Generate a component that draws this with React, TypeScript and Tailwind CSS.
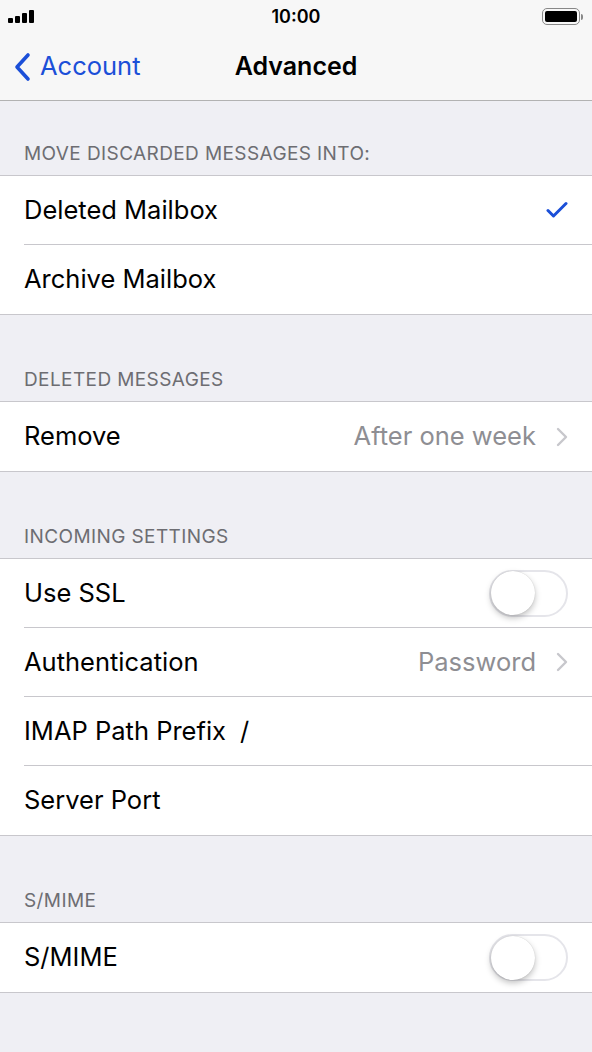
import React from "react";

const font = { fontFamily: "Inter, 'Noto Sans', sans-serif" };

function Chevron() {
    return (
        <svg width="12" height="20" viewBox="0 0 12 20" className="ml-5 shrink-0">
            <path d="M2 2 L10 10 L2 18" fill="none" stroke="#c7c7cc" strokeWidth="2.4" strokeLinecap="round" strokeLinejoin="round" />
        </svg>
    );
}

function Toggle() {
    return (
        <div className="relative h-[47px] w-[79px] rounded-full border-2 border-[#e5e5ea] bg-white">
            <div className="absolute left-0 top-[-0.5px] h-[44px] w-[44px] rounded-full bg-white shadow-[0_3px_6px_rgba(0,0,0,0.25),0_0_1px_rgba(0,0,0,0.2)]" />
        </div>
    );
}

function Check() {
    return (
        <svg width="22" height="18" viewBox="0 0 22 18">
            <path d="M2 9.5 L7.5 15 L20 2.5" fill="none" stroke="#1b4fd8" strokeWidth="3" strokeLinecap="round" strokeLinejoin="round" />
        </svg>
    );
}

function Header({ text, first }: { text: string; first?: boolean }) {
    return (
        <div
            className={`flex items-end px-6 pb-[7px] text-[19px] leading-[28px] tracking-[0.4px] text-[#6d6d72] ${first ? "h-[74px]" : "h-[86px]"}`}
        >
            {text}
        </div>
    );
}

function Row({ label, right, last }: { label: React.ReactNode; right?: React.ReactNode; last?: boolean }) {
    return (
        <div className="flex h-[69px] items-stretch bg-white pl-6">
            <div className={`flex flex-1 items-center pr-6 ${last ? "" : "border-b border-[#c8c7cc]"}`}>
                <div className="flex-1 text-[25.5px] text-black">{label}</div>
                {right}
            </div>
        </div>
    );
}

function Group({ children }: { children: React.ReactNode }) {
    return <div className="border-y border-[#c8c7cc]">{children}</div>;
}

function Value({ text }: { text: string }) {
    return (
        <div className="flex items-center text-[25.5px] text-[#8e8e93]">
            {text}
            <Chevron />
        </div>
    );
}

export default function App() {
    return (
        <div className="flex h-[1052px] w-[592px] flex-col bg-[#efeff4]" style={font}>
            <div className="border-b border-[#b2b2b2] bg-[#f7f7f7]">
                <div className="relative flex h-[33px] items-center justify-center">
                    <div className="absolute left-[8px] top-[10px] flex items-end gap-[2px]">
                        <div className="h-[5px] w-[5px] rounded-[1px] bg-black" />
                        <div className="h-[7px] w-[5px] rounded-[1px] bg-black" />
                        <div className="h-[10px] w-[5px] rounded-[1px] bg-black" />
                        <div className="h-[13px] w-[5px] rounded-[1px] bg-black" />
                    </div>
                    <span className="text-[18px] font-semibold text-black">10:00</span>
                    <div className="absolute right-[9px] top-[8px] flex items-center">
                        <div className="flex h-[17px] w-[38px] items-center rounded-[5px] border border-[#888] p-[2px]">
                            <div className="h-full w-full rounded-[2px] bg-black" />
                        </div>
                        <div className="ml-[1px] h-[6px] w-[2px] rounded-r-sm bg-[#888]" />
                    </div>
                </div>
                <div className="relative flex h-[67px] items-center justify-center">
                    <div className="absolute left-[12px] top-0 flex h-full items-center text-[#1b4fd8]">
                        <svg width="22" height="30" viewBox="0 0 22 30">
                            <path d="M16 3 L5 15 L16 27" fill="none" stroke="#1b4fd8" strokeWidth="3.6" strokeLinecap="round" strokeLinejoin="round" />
                        </svg>
                        <span className="ml-[6px] text-[25.5px]">Account</span>
                    </div>
                    <span className="text-[25px] font-semibold text-black">Advanced</span>
                </div>
            </div>

            <Header text="MOVE DISCARDED MESSAGES INTO:" first />
            <Group>
                <Row label="Deleted Mailbox" right={<Check />} />
                <Row label="Archive Mailbox" last />
            </Group>

            <Header text="DELETED MESSAGES" />
            <Group>
                <Row label="Remove" right={<Value text="After one week" />} last />
            </Group>

            <Header text="INCOMING SETTINGS" />
            <Group>
                <Row label="Use SSL" right={<Toggle />} />
                <Row label="Authentication" right={<Value text="Password" />} />
                <Row
                    label={
                        <span>
                            IMAP Path Prefix<span className="ml-[14px]">/</span>
                        </span>
                    }
                />
                <Row label="Server Port" last />
            </Group>

            <Header text="S/MIME" />
            <Group>
                <Row label="S/MIME" right={<Toggle />} last />
            </Group>
        </div>
    );
}
